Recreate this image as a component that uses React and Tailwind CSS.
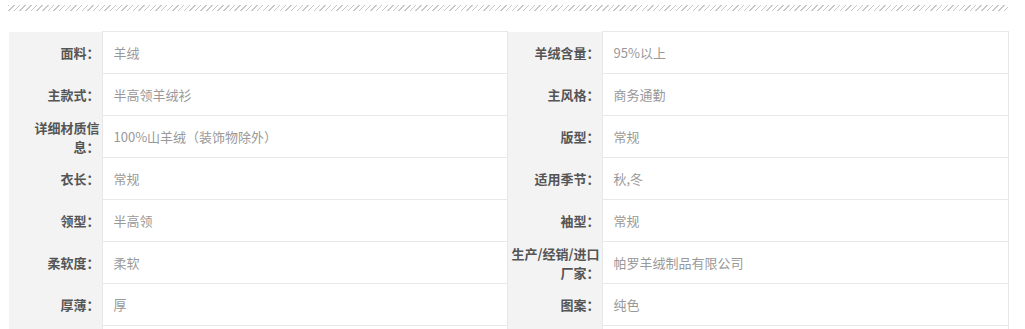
import React from "react";

const rows = [
  ["面料", "羊绒", "羊绒含量", "95%以上"],
  ["主款式", "半高领羊绒衫", "主风格", "商务通勤"],
  ["详细材质信息", "100%山羊绒（装饰物除外）", "版型", "常规"],
  ["衣长", "常规", "适用季节", "秋,冬"],
  ["领型", "半高领", "袖型", "常规"],
  ["柔软度", "柔软", ["生产/经销/进口", "厂家"], "帕罗羊绒制品有限公司"],
  ["厚薄", "厚", "图案", "纯色"],
  ["", "", "", ""],
];

function Label({ children }) {
  let content = "";
  if (Array.isArray(children)) {
    content = (
      <>
        <span className="whitespace-nowrap">{children[0]}</span>
        {children[1]}：
      </>
    );
  } else if (children) {
    content = children + "：";
  }
  return (
    <td className="bg-[#f3f3f3] text-right align-middle pr-[2px] pl-[4px] font-bold text-[#555] text-[13px] leading-[19px]">
      {content}
    </td>
  );
}

function Value({ children }) {
  return (
    <td className="border border-[#e8e8e8] bg-white align-middle pl-[11px] pr-2 text-[#999] text-[13px] leading-[19px]">
      {children}
    </td>
  );
}

export default function App() {
  return (
    <div
      className="w-[1025px] h-[329px] overflow-hidden bg-white pl-[9px] pt-[5px]"
      style={{ fontFamily: '"Noto Sans CJK SC", "Noto Sans", sans-serif' }}
    >
      <div className="w-[1000px] h-[6px] -ml-px bg-[repeating-linear-gradient(135deg,#c8c8c8_0px,#c8c8c8_1px,transparent_1px,transparent_4px)]" />
      <table className="mt-[20px] w-[999px] table-fixed border-collapse">
        <colgroup>
          <col className="w-[93px]" />
          <col className="w-[405px]" />
          <col className="w-[95px]" />
          <col className="w-[406px]" />
        </colgroup>
        <tbody>
          {rows.map((r, i) => (
            <tr key={i} className="h-[42px]">
              <Label>{r[0]}</Label>
              <Value>{r[1]}</Value>
              <Label>{r[2]}</Label>
              <Value>{r[3]}</Value>
            </tr>
          ))}
        </tbody>
      </table>
    </div>
  );
}
